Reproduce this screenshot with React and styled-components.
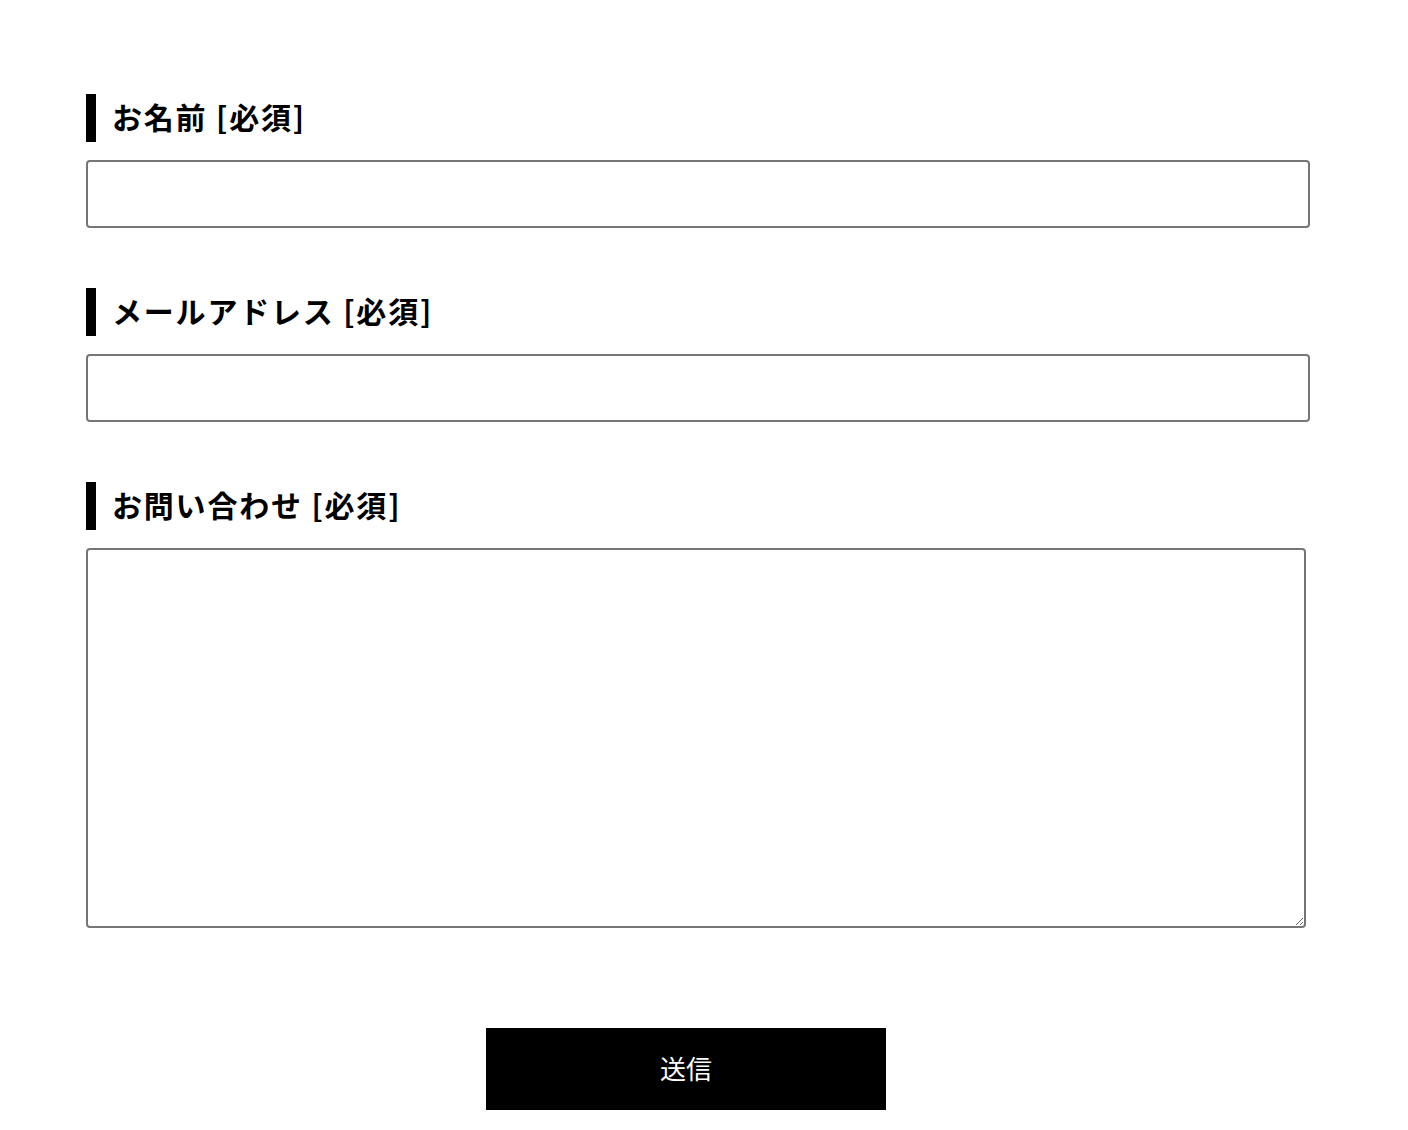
import React from "react";
import styled, { createGlobalStyle } from "styled-components";

const Global = createGlobalStyle`
  html, body { margin: 0; padding: 0; background: #fff; }
  body { font-family: "Noto Sans CJK JP", "Noto Sans", sans-serif; color: #000; }
  * { box-sizing: border-box; }
`;

const Page = styled.div`
  padding: 94px 0 20px 86px;
`;

const Form = styled.form`
  width: 1224px;
  display: flex;
  flex-direction: column;
`;

const Field = styled.div`
  display: flex;
  flex-direction: column;
  gap: 18px;
  margin-bottom: ${(p) => p.$mb}px;
`;

const Label = styled.label`
  display: block;
  border-left: 10px solid #000;
  padding-left: 16px;
  padding-bottom: 4px;
  font-size: 30px;
  font-weight: 700;
  line-height: 44px;
  height: 48px;
  letter-spacing: 0.06em;
  white-space: nowrap;
`;

const Input = styled.input`
  width: 100%;
  height: 68px;
  border: 2px solid #767676;
  border-radius: 4px;
  font-size: 20px;
  padding: 0 12px;
  font-family: inherit;
  background: #fff;
  outline: none;
`;

const TextArea = styled.textarea`
  width: 1220px;
  height: 380px;
  border: 2px solid #767676;
  border-radius: 4px;
  font-size: 20px;
  padding: 12px;
  font-family: inherit;
  background: #fff;
  outline: none;
  display: block;
`;

const ButtonRow = styled.div`
  display: flex;
  justify-content: center;
  padding-right: 24px;
`;

const Submit = styled.button`
  width: 400px;
  height: 82px;
  background: #000;
  color: #fff;
  border: none;
  padding: 0 0 4px;
  font-family: "Noto Sans CJK JP", sans-serif;
  font-size: 26px;
  font-weight: 400;
  cursor: pointer;
`;

export default function App() {
  return (
    <>
      <Global />
      <Page>
        <Form onSubmit={(e) => e.preventDefault()}>
          <Field $mb={60}>
            <Label>お名前 [必須]</Label>
            <Input type="text" />
          </Field>
          <Field $mb={60}>
            <Label>メールアドレス [必須]</Label>
            <Input type="email" />
          </Field>
          <Field $mb={100}>
            <Label>お問い合わせ [必須]</Label>
            <TextArea />
          </Field>
          <ButtonRow>
            <Submit type="submit">送信</Submit>
          </ButtonRow>
        </Form>
      </Page>
    </>
  );
}
